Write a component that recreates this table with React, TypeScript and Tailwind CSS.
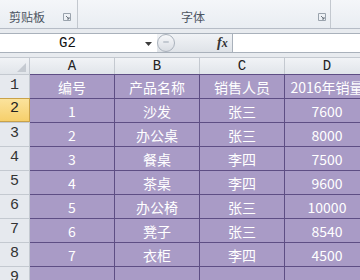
import React from "react";

const rows = [
  ["编号", "产品名称", "销售人员", "2016年销量"],
  ["1", "沙发", "张三", "7600"],
  ["2", "办公桌", "张三", "8000"],
  ["3", "餐桌", "李四", "7500"],
  ["4", "茶桌", "李四", "9600"],
  ["5", "办公椅", "张三", "10000"],
  ["6", "凳子", "张三", "8540"],
  ["7", "衣柜", "李四", "4500"],
  ["", "", "", ""],
];

const cjk = { fontFamily: '"Noto Sans CJK SC", "Noto Sans", sans-serif' };
const mono = { fontFamily: '"Liberation Mono", "DejaVu Sans Mono", monospace' };

const Launcher = () => (
  <svg width="8" height="8" viewBox="0 0 8 8">
    <path d="M0.5 0.5H7.5V7.5H0.5Z" fill="none" stroke="#9aa3ad" strokeWidth="1" />
    <path d="M3 3L6 6M6 4V6H4" fill="none" stroke="#6f7780" strokeWidth="1" />
  </svg>
);

export default function App() {
  return (
    <div className="w-[360px] h-[280px] overflow-hidden bg-[#e8ebef]" style={cjk}>
      {/* Ribbon group labels */}
      <div className="h-[29px] flex border-b border-[#b6bcc6] bg-gradient-to-b from-[#f4f6f9] to-[#e9edf2]">
        <div className="w-[78px] flex items-end justify-between pl-[9px] pr-[6px] pb-[4px] border-r border-[#c3c8cf]">
          <span className="text-[12px] leading-[14px] text-[#4d5562]">剪贴板</span>
          <span className="mb-[3px]"><Launcher /></span>
        </div>
        <div className="w-[253px] flex items-end justify-between pl-[103px] pr-[4px] pb-[4px] border-r border-[#c3c8cf]">
          <span className="text-[12px] leading-[14px] text-[#4d5562]">字体</span>
          <span className="mb-[3px]"><Launcher /></span>
        </div>
        <div className="flex-1" />
      </div>

      {/* Formula bar */}
      <div className="mt-[4px] h-[20px] flex border-y border-[#a9b1bb] bg-white">
        <div className="w-[157px] flex items-center relative">
          <span className="absolute left-[59px] top-[1px] text-[14px] leading-[17px] text-[#111]" style={mono}>G2</span>
          <svg className="absolute left-[145px] top-[8px]" width="7" height="4" viewBox="0 0 7 4">
            <path d="M0 0H7L3.5 4Z" fill="#3c3c3c" />
          </svg>
        </div>
        <div className="w-[76px] flex items-center bg-gradient-to-b from-[#f1f3f6] to-[#dfe3e8] border-r border-[#a9b1bb] relative">
          <div className="absolute left-0 top-[0px] w-[18px] h-[18px] rounded-full border border-[#aab2bc] bg-gradient-to-b from-[#f7f8fa] to-[#d9dde3]">
            <div className="mx-auto mt-[6px] w-[6px] h-[2px] rounded bg-[#c3c9d1]" />
          </div>
          <span className="absolute left-[60px] top-[1px] text-[14px] leading-[16px] italic font-bold text-[#333]" style={{ fontFamily: '"Liberation Serif", serif' }}>
            f<span className="text-[12px]">x</span>
          </span>
        </div>
        <div className="flex-1 bg-white" />
      </div>

      {/* Sheet */}
      <div className="mt-[4px]">
        {/* Column headers */}
        <div className="flex h-[17px] border-t border-[#c4c9d0] bg-gradient-to-b from-[#f1f3f6] to-[#e1e5ea]">
          <div className="w-[30px] shrink-0 border-r border-[#c4c9d0] relative">
            <svg className="absolute right-[3px] bottom-[2px]" width="9" height="9" viewBox="0 0 9 9">
              <path d="M9 0V9H0Z" fill="#c5cad1" />
            </svg>
          </div>
          {["A", "B", "C", "D"].map((c) => (
            <div key={c} className="w-[85px] shrink-0 flex items-center justify-center border-r border-[#c4c9d0] text-[14px] text-[#222]" style={mono}>
              {c}
            </div>
          ))}
        </div>

        {rows.map((r, i) => (
          <div key={i} className="flex h-[24px]">
            <div
              className={
                i === 1
                  ? "w-[30px] shrink-0 flex items-end justify-center pb-[1px] border-y border-[#c9a24a] border-r bg-gradient-to-b from-[#fbe39c] to-[#f6cf6a] text-[15px] text-[#222]"
                  : "w-[30px] shrink-0 flex items-end justify-center pb-[1px] border-t border-[#c4c9d0] border-r bg-[#e6e9ee] text-[15px] text-[#333]"
              }
              style={mono}
            >
              {i + 1}
            </div>
            {r.map((v, j) => (
              <div
                key={j}
                className="w-[85px] shrink-0 flex items-center justify-center border-t border-r border-[#5e4e84] bg-[#a99bc6] text-[14px] leading-[18px] text-white whitespace-nowrap overflow-visible"
              >
                {v}
              </div>
            ))}
          </div>
        ))}
      </div>
    </div>
  );
}
